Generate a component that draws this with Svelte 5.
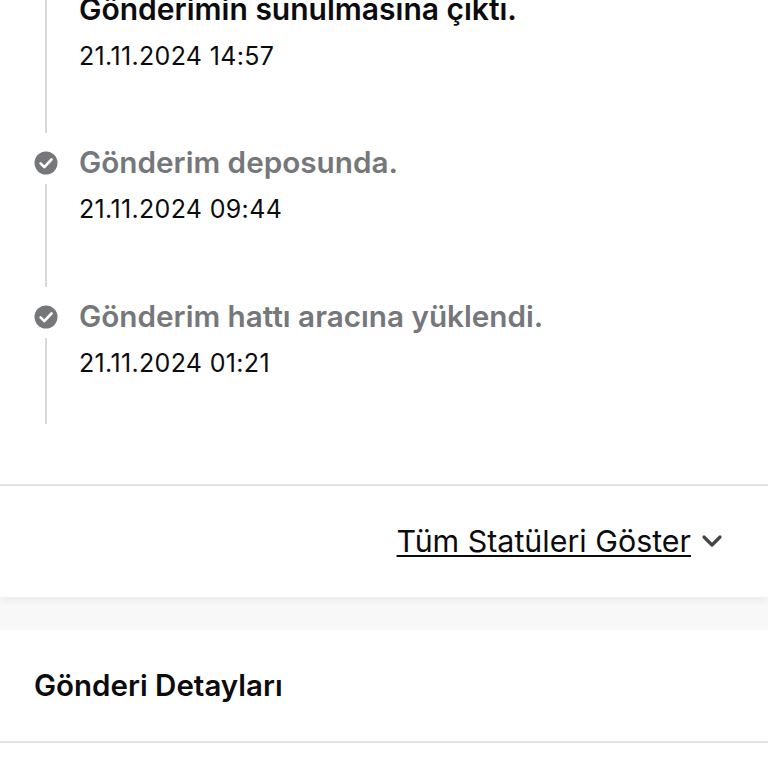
<script>
  const items = [
    { title: 'Gönderimin sunulmasına çıktı.', date: '21.11.2024 14:57', current: true },
    { title: 'Gönderim deposunda.', date: '21.11.2024 09:44' },
    { title: 'Gönderim hattı aracına yüklendi.', date: '21.11.2024 01:21' }
  ];
</script>

<div class="page">
  <section class="card">
    <ol class="timeline">
      {#each items as item}
        <li class="item" class:current={item.current}>
          <div class="marker">
            {#if !item.current}
              <svg class="check" viewBox="0 0 24 24" width="24" height="24" aria-hidden="true">
                <circle cx="12" cy="12" r="11.5" fill="#75777b" />
                <path d="M6.6 12.4l3.7 3.7 7.2-7.6" fill="none" stroke="#fff" stroke-width="2.6" stroke-linecap="round" stroke-linejoin="round" />
              </svg>
            {/if}
            <span class="line"></span>
          </div>
          <div class="body">
            <h3 class="title">{item.title}</h3>
            <p class="date">{item.date}</p>
          </div>
        </li>
      {/each}
    </ol>
    <div class="more">
      <a class="link" href="#statuses">Tüm Statüleri Göster</a>
      <svg viewBox="0 0 24 24" width="24" height="24" aria-hidden="true">
        <path d="M4 8l8 8 8-8" fill="none" stroke="#444" stroke-width="3.2" stroke-linecap="round" stroke-linejoin="round" />
      </svg>
    </div>
  </section>
  <section class="details">
    <h2>Gönderi Detayları</h2>
  </section>
</div>

<style>
  :global(body) {
    margin: 0;
    background: #fff;
  }
  .page {
    height: 768px;
    overflow: hidden;
    background: #f8f8f8;
    font-family: Inter, "Liberation Sans", sans-serif;
    color: #0c0c0e;
  }
  .card {
    background: #fff;
    box-shadow: 0 3px 8px rgba(0, 0, 0, 0.06);
    height: 597px;
  }
  .timeline {
    display: flow-root;
    list-style: none;
    margin: 0;
    padding: 0 0 0 34px;
    box-sizing: border-box;
    border-bottom: 2px solid #e2e2e2;
    height: 486px;
  }
  .item {
    display: grid;
    grid-template-columns: 24px 1fr;
    column-gap: 21px;
    min-height: 136px;
    margin-bottom: 18px;
  }
  .item.current {
    margin-top: -3px;
  }
  .current .body {
    padding-top: 1px;
  }
  .item:last-child {
    min-height: 119px;
    margin-bottom: 0;
  }
  .marker {
    display: flex;
    flex-direction: column;
    align-items: center;
    gap: 9px;
  }
  .check {
    flex: none;
  }
  .line {
    flex: 1;
    width: 2px;
    background: #d8d8d8;
  }
  .body {
    min-width: 0;
  }
  .title {
    margin: 0;
    font-size: 29.7px;
    line-height: 22px;
    font-weight: 600;
    color: #75777b;
  }
  .current .title {
    font-size: 30px;
    color: #0c0c0e;
  }
  .date {
    margin: 21px 0 0;
    font-size: 25px;
    line-height: 30px;
    letter-spacing: 0.33px;
    font-weight: 400;
    color: #0c0c0e;
  }
  .more {
    display: flex;
    justify-content: flex-end;
    align-items: center;
    gap: 9px;
    padding: 0 44px 2px 0;
    box-sizing: border-box;
    height: 111px;
  }
  .link {
    font-size: 30.4px;
    color: #0c0c0e;
    text-decoration: underline;
    text-decoration-thickness: 2px;
    text-underline-offset: 3px;
  }
  .details {
    margin-top: 33px;
    background: #fff;
    height: 200px;
  }
  h2 {
    margin: 0;
    padding: 0 0 1px 34px;
    height: 113px;
    box-sizing: border-box;
    display: flex;
    align-items: center;
    font-size: 29.5px;
    font-weight: 600;
    border-bottom: 2px solid #e2e2e2;
    color: #0c0c0e;
  }
</style>
